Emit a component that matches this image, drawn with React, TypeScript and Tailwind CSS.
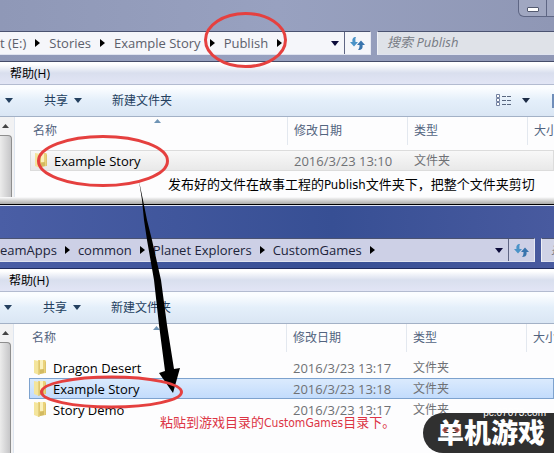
interface FileRow {
  name: string;
  date: string;
  state?: "hover" | "selected";
}

const rowStyle = {
  hover:
    "bg-linear-to-b from-[#f9f9f9] to-[#e8e8e8] shadow-[inset_0_0_0_1px_#dcdcdc]",
  selected:
    "bg-linear-to-b from-[#dcebfd] to-[#c1dbfc] shadow-[inset_0_0_0_1px_#7da2ce]",
};

function Caret({ className }: { className: string }) {
  return (
    <svg className={className} width="8" height="5" viewBox="0 0 8 5" aria-hidden="true">
      <path d="M0 0h8L4 5z" fill="currentColor" />
    </svg>
  );
}

function FolderIcon() {
  return (
    <svg width="14" height="17" viewBox="0 0 14 17" className="shrink-0" aria-hidden="true">
      <path d="M5 1h7l1 1v12l-8 1z" fill="#ead27a" />
      <path d="M7 1h3v9H7z" fill="#faf1bd" />
      <path d="M7 11l4-1v4l-4 1z" fill="#d2ba62" />
      <path d="M1 1l5 1v14l-5-2z" fill="#f4e59c" />
      <path d="M6 2v14" stroke="#d6bc60" />
      <path d="M12.500 3v11" stroke="#dcc46e" />
    </svg>
  );
}

function RefreshIcon() {
  return (
    <svg width="15" height="15" viewBox="0 0 15 15" aria-hidden="true">
      <path d="M6 1C3 1 2 3 2.500 6H0l4 4.500L8 6H5.500c0-2-.5-3 .5-5z" fill="#4a93c8" />
      <path d="M8 14c4 0 5-2 4.500-5H15l-4-4.500L7 9h2.500c0 2 0 3-1.500 5z" fill="#3874ad" />
    </svg>
  );
}

function AddressBar(props: { path: string[]; search: string; dim: boolean }) {
  const { path, search, dim } = props;
  const tone = dim
    ? "bg-[#f5f6fa] text-[#5c606b]"
    : "bg-[#cdd0e6] text-[#20243a]";

  return (
    <div className="flex h-6 gap-[6px]">
      <nav
        aria-label="地址"
        className={`flex items-center border-y border-r border-t-[#4b5371] border-b-[#dfe3ef] border-r-[#e6e9f3] text-[13px] leading-5 ${tone} ${
          dim ? "w-[371px]" : "w-[535px]"
        }`}
      >
        {path.map((part) => (
          <span key={part} className="flex items-center">
            <button className="whitespace-nowrap">{part}</button>
            <svg
              width="5"
              height="8"
              viewBox="0 0 5 8"
              className={`text-black ${dim ? "mx-[9px]" : "mx-2"}`}
              aria-hidden="true"
            >
              <path d="M0 0v8l5-4z" fill="currentColor" />
            </svg>
          </span>
        ))}
        <button aria-label="历史记录" className="mr-[5px] ml-auto text-[#0c0c3a]">
          <Caret className="block" />
        </button>
        <button
          aria-label="刷新"
          className="flex h-full w-[26px] items-center justify-center border-l border-[#5f6684]"
        >
          <RefreshIcon />
        </button>
      </nav>
      <input
        type="text"
        aria-label={search}
        placeholder={search}
        className={`min-w-0 flex-1 border border-r-0 border-t-[#4b5371] border-b-[#dfe3ef] border-l-[#eef0f6] pl-[9px] text-[13px] italic outline-none placeholder:text-[#777b84] ${
          dim ? "bg-[#dfe2e8]" : "bg-[#d0d3e6]"
        }`}
      />
    </div>
  );
}

function MenuBar({ inset }: { inset: string }) {
  return (
    <div
      className={`flex h-[23px] items-center border-b border-[#b3bbd0] bg-linear-to-b from-white from-10% via-[#d9dfee] via-50% to-[#e2e5f5] pt-[2px] text-xs text-black ${inset}`}
    >
      <button>帮助(H)</button>
    </div>
  );
}

function Toolbar({ views, inset }: { views: boolean; inset: string }) {
  return (
    <div
      className={`flex h-8 items-center border-b border-[#a3b1c6] bg-linear-to-b from-[#fbfdff] from-10% via-[#e4effa] via-50% to-[#dae6f4] text-xs text-[#24405f] ${inset}`}
    >
      <button aria-label="组织" className="mr-[31px]">
        <Caret className="block" />
      </button>
      <button className="mr-[30px] flex items-center gap-[6px]">
        共享
        <Caret className="block" />
      </button>
      <button>新建文件夹</button>
      {views && (
        <>
          <button aria-label="更改视图" className="ml-auto flex items-center gap-[10px]">
            <svg width="16" height="13" viewBox="0 0 16 13" aria-hidden="true">
              <path
                d="M.5.5h3v3h-3zM.5 4.5h3v3h-3zM.5 8.5h3v3h-3z"
                fill="#fff"
                stroke="#7381a0"
              />
              <path
                d="M6 2.5h4M11 2.5h4M6 6.5h4M11 6.5h4M6 10.5h4M11 10.5h4"
                stroke="#59677f"
              />
            </svg>
            <Caret className="block text-[#1c2b45]" />
          </button>
          <button aria-label="预览窗格" className="ml-[22px] h-[14px] w-[2px] bg-[#6f8db9]" />
        </>
      )}
    </div>
  );
}

function FileList({ rows, rail, space }: { rows: FileRow[]; rail: string; space: string }) {
  return (
    <div className="flex flex-1 overflow-hidden bg-[#fdfdfe]">
      <div className={`flex shrink-0 flex-col border-r border-[#dfe6f0] bg-[#f2f2f3] ${rail}`}>
        <svg width="7" height="4" viewBox="0 0 7 4" className="mt-[7px] mb-[7px] ml-[2px]" aria-hidden="true">
          <path d="M0 4h7L3.500 0z" fill="#444" />
        </svg>
        <div className="mr-[2px] flex-1 rounded-tr-sm border-t border-r border-[#8e8e8e] bg-linear-to-r from-[#ececec] to-[#c6c6c8]" />
      </div>
      <table className={`ml-[15px] w-full table-fixed self-start text-left text-xs ${space}`}>
        <thead className="text-[#53647f]">
          <tr className="h-[33px] align-top">
            <th className="w-[257px] pl-[3px] font-normal">
              <div className="flex h-[28px] items-center">
                名称
                <svg width="7" height="4" viewBox="0 0 7 4" className="mb-5 ml-[97px]" aria-hidden="true">
                  <path d="M0 4L3.500 0 7 4z" fill="#6f94b5" />
                </svg>
              </div>
            </th>
            {["修改日期", "类型", "大小"].map((title) => (
              <th key={title} className="w-[120px] font-normal whitespace-nowrap last:w-auto">
                <div className="flex h-[28px] items-center border-l border-[#e3e8ef] pl-[6px]">{title}</div>
              </th>
            ))}
          </tr>
        </thead>
        <tbody>
          {rows.map((row) => (
            <tr key={row.name} className={`h-[21px] ${row.state ? rowStyle[row.state] : ""}`}>
              <td className="pl-[4px]">
                <div className="flex items-center gap-[6px] text-[13px] leading-5 text-black">
                  <FolderIcon />
                  {row.name}
                </div>
              </td>
              <td className="pl-[7px] text-[13px] leading-4 whitespace-nowrap text-[#6f7175]">{row.date}</td>
              <td className="pl-[7px] text-[#6f7175]">文件夹</td>
              <td />
            </tr>
          ))}
        </tbody>
      </table>
    </div>
  );
}

function Watermark() {
  return (
    <div className="absolute right-0 bottom-0 flex h-10 w-[131px] items-center rounded-l-full bg-[#303030] pl-[14px] text-white">
      <span className="absolute -top-[6px] right-[8px] font-['Liberation_Sans',sans-serif] text-[10px] leading-3">
        pc.07073.com
      </span>
      <span className="text-[27px] leading-8 font-black whitespace-nowrap">单机游戏</span>
      <svg width="20" height="8" viewBox="0 0 20 8" className="absolute top-[13px] left-[18px]" aria-hidden="true">
        <path d="M1 4l3-3 3 3-3 3zM19 4l-3-3-3 3 3 3z" fill="#b9564f" />
        <path d="M4 3v2M16 3v2" stroke="#303030" />
      </svg>
    </div>
  );
}

export default function App() {
  return (
    <main className="relative flex min-h-screen flex-col overflow-hidden font-['Open_Sans','Noto_Sans_CJK_SC',sans-serif]">
      <section className="flex flex-col bg-linear-to-r from-[#8f98b7] via-[#98a1c0] to-[#8f97b5]">
        <div className="flex h-[31px] items-start justify-end">
          <button
            aria-label="最小化"
            className="flex h-[17px] w-[29px] items-center justify-center rounded-bl-md border border-t-0 border-[#5e6684] bg-[#a0a7c1]"
          >
            <span className="mt-[2px] h-[5px] w-3 rounded-[1px] border border-[#535a70] bg-white" />
          </button>
          <span className="h-[17px] w-[7px] border-b border-[#5e6684] bg-[#a0a7c1]" />
        </div>
        <AddressBar path={["t (E:)", "Stories", "Example Story", "Publish"]} search="搜索 Publish" dim />
        <div className="h-[7px] border-b border-[#454c69]" />
        <MenuBar inset="pl-[10px]" />
        <Toolbar views inset="pl-[5px]" />
        <FileList
          rail="w-[15px]"
          space="mb-[26px]"
          rows={[{ name: "Example Story", date: "2016/3/23 13:10", state: "hover" }]}
        />
        <div className="h-[8px] border-b border-black bg-linear-to-b from-[#fdfdfe] to-[#aaaaa8]" />
      </section>

      <section className="flex flex-1 flex-col border-t border-[#dfe5f5] bg-linear-to-r from-[#4a5ea5] via-[#374f94] via-60% to-[#485a9f]">
        <div className="h-8" />
        <AddressBar path={["eamApps", "common", "Planet Explorers", "CustomGames"]} search="搜" dim={false} />
        <div className="h-[7px] border-b border-[#202c5e]" />
        <MenuBar inset="pl-[9px]" />
        <Toolbar views={false} inset="pl-[4px]" />
        <FileList
          rail="w-[14px]"
          space="mb-2"
          rows={[
            { name: "Dragon Desert", date: "2016/3/23 13:17" },
            { name: "Example Story", date: "2016/3/23 13:18", state: "selected" },
            { name: "Story Demo", date: "2016/3/23 13:17" },
          ]}
        />
      </section>

      {/* notes drawn over both windows */}
      <p className="absolute top-[177px] left-[168px] font-['DejaVu_Sans_Condensed','Noto_Sans_CJK_SC',sans-serif] text-[13px] leading-4 whitespace-nowrap text-black">
        发布好的文件在故事工程的Publish文件夹下，把整个文件夹剪切
      </p>
      <p className="absolute top-[415px] left-[160px] font-['DejaVu_Sans_Condensed','Noto_Sans_CJK_SC',sans-serif] text-[13px] leading-4 whitespace-nowrap text-[#dc3545]">
        粘贴到游戏目录的<span className="text-xs">CustomGames</span>目录下。
      </p>
      <svg className="pointer-events-none absolute top-0 left-0" width="554" height="453" viewBox="0 0 554 453" aria-hidden="true">
        <path
          d="M139 181L143 200 147 220 152 240 161 280 167 325 174 369 180 368 173 393 159 373 165 371 159 325 154 280 147 240 144 220 142 200z"
          fill="#000"
        />
        <g fill="none" stroke="#e5403f" strokeWidth="3">
          <ellipse cx="245.500" cy="40" rx="40" ry="26.500" />
          <ellipse cx="103" cy="161" rx="64.500" ry="24.500" />
          <ellipse cx="111.500" cy="392" rx="70" ry="15" />
        </g>
      </svg>
      <Watermark />
    </main>
  );
}
